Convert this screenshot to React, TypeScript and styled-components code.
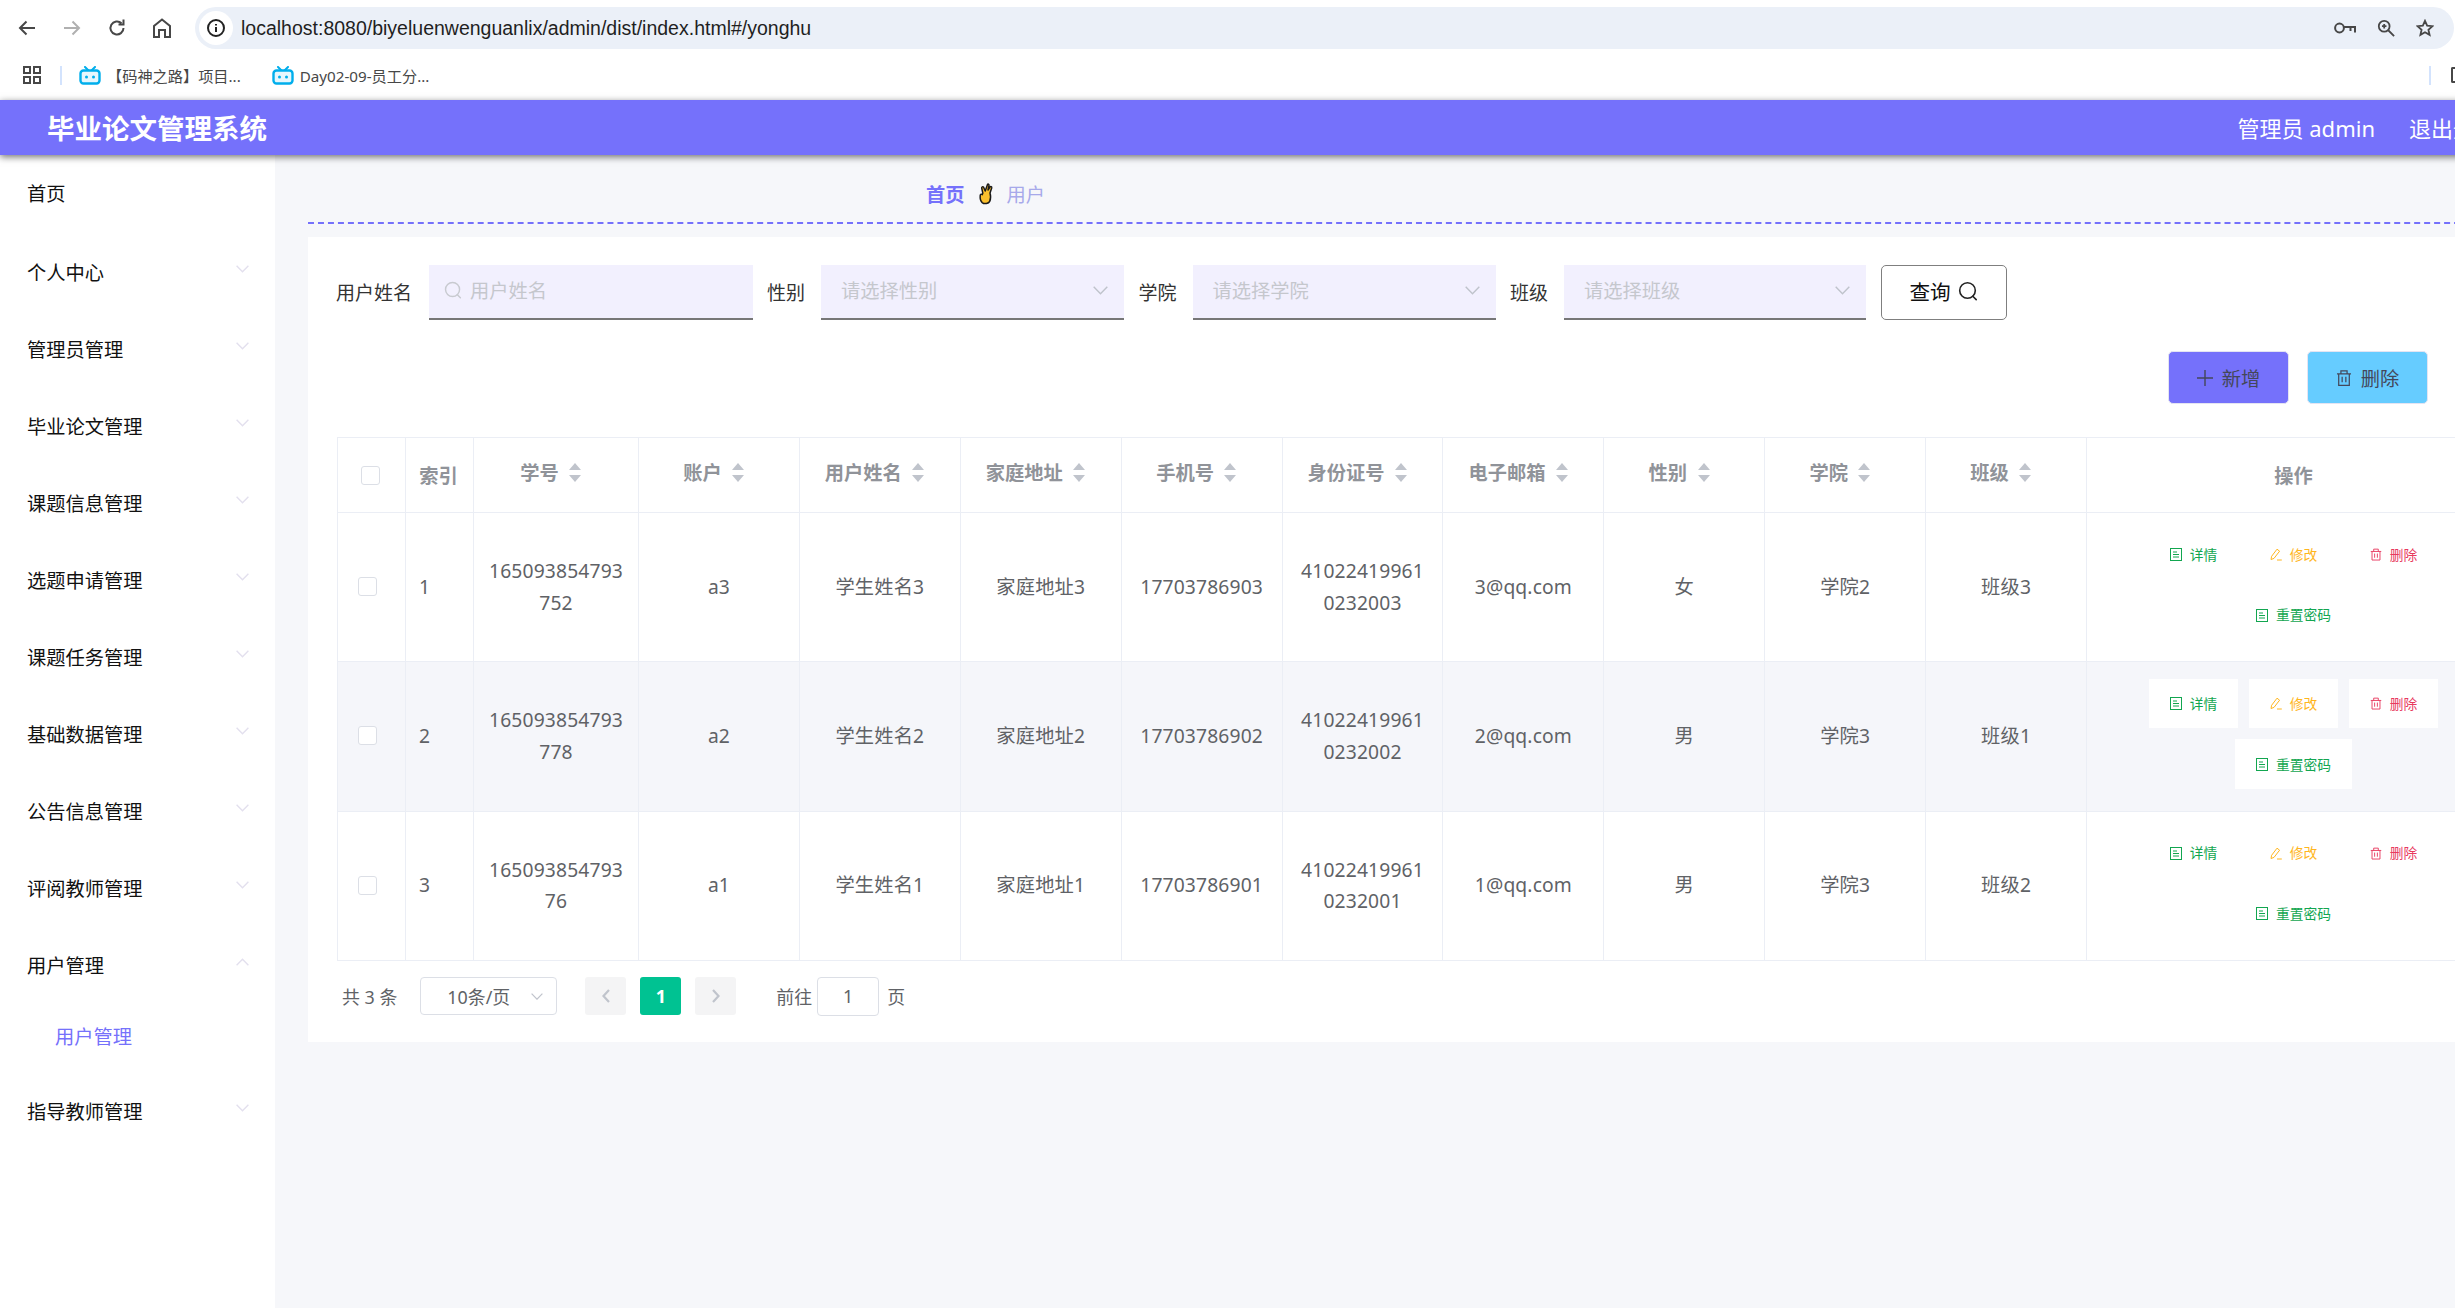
import React from 'react';
import styled, { createGlobalStyle } from 'styled-components';

const Global = createGlobalStyle`
  html, body { margin: 0; padding: 0; overflow: hidden; background: #fff; }
  body { font-family: "Noto Sans", "Noto Sans CJK SC", sans-serif; }
  * { box-sizing: border-box; }
`;

const Page = styled.div`
  width: 2500px;
  height: 1308px;
  overflow: hidden;
  display: flex;
  flex-direction: column;
`;

/* ---------- browser chrome ---------- */
const Browser = styled.div`
  height: 100px;
  background: #fff;
  display: flex;
  flex-direction: column;
  flex: none;
  width: 2455px;
`;
const Toolbar = styled.div`
  height: 56px;
  display: flex;
  align-items: flex-start;
  padding: 7px 1px 0 17px;
`;
const NavGroup = styled.div`
  height: 42px;
  display: flex;
  align-items: center;
  gap: 25px;
  margin-right: 23px;
`;
const AddressBar = styled.div`
  flex: 1;
  height: 42px;
  border-radius: 21px;
  background: #ebf0f8;
  display: flex;
  align-items: center;
  padding: 0 20px 0 4px;
`;
const SiteInfo = styled.div`
  width: 34px;
  height: 34px;
  border-radius: 50%;
  background: #fff;
  display: flex;
  align-items: center;
  justify-content: center;
  margin-right: 8px;
`;
const Url = styled.span`
  flex: 1;
  font-size: 19.5px;
  color: #1f1f1f;
  font-family: "Liberation Sans", "Noto Sans", sans-serif;
  white-space: nowrap;
`;
const BarIcons = styled.div`
  display: flex;
  align-items: center;
  gap: 21px;
`;
const Bookmarks = styled.div`
  height: 44px;
  padding: 0 0 6px 23px;
  display: flex;
  align-items: center;
`;
const BookSep = styled.div`
  width: 2px;
  height: 19px;
  background: #d3e3fd;
  margin: 0 17px 0 19px;
`;
const Bookmark = styled.div`
  display: flex;
  align-items: center;
  gap: 6px;
  margin-right: 31px;
  font-size: 15.2px;
  color: #474747;
  white-space: nowrap;
`;
const BookSpacer = styled.div`
  flex: 1;
`;
const BookEnd = styled.div`
  width: 2px;
  height: 19px;
  background: #d3e3fd;
  margin-right: 20px;
`;
const BookStub = styled.div`
  width: 4px;
  height: 16px;
  border: 2px solid #474747;
  border-right: none;
  border-radius: 2px 0 0 2px;
`;

/* ---------- app header ---------- */
const Header = styled.header`
  height: 55px;
  flex: none;
  background: #7571fb;
  box-shadow: 0 2px 7px rgba(0, 0, 0, 0.55);
  position: relative;
  z-index: 2;
  display: flex;
  align-items: center;
  justify-content: space-between;
  padding: 0 3px 2px 47px;
  color: #fff;
`;
const Title = styled.h1`
  margin: 0;
  font-size: 27.5px;
  font-weight: 700;
  color: #fff;
`;
const UserBox = styled.div`
  display: flex;
  align-items: center;
  gap: 34px;
  font-size: 22px;
`;

/* ---------- body ---------- */
const Body = styled.div`
  flex: 1;
  display: flex;
  min-height: 0;
`;
const Sidebar = styled.nav`
  width: 275px;
  flex: none;
  background: #fff;
`;
const MenuItem = styled.div<{ $first?: boolean }>`
  height: 77px;
  margin-bottom: ${p => (p.$first ? 2 : 0)}px;
  padding: 0 26px 1px 27px;
  display: flex;
  align-items: center;
  justify-content: space-between;
  font-size: 19.25px;
  color: #111;
`;
const SubItem = styled.div`
  height: 69px;
  padding: 0 0 6px 55px;
  display: flex;
  align-items: center;
  font-size: 19.25px;
  color: #7571fb;
`;
const Chevron = styled.svg`
  width: 13px;
  height: 8px;
  margin-bottom: 7px;
  fill: none;
  stroke: #e3e0ee;
  stroke-width: 1.4;
`;
const Main = styled.main`
  flex: 1;
  min-width: 0;
  background: #f6f7fa;
  padding-left: 33px;
`;
const Crumbs = styled.div`
  height: 69px;
  padding: 11px 0 0 618px;
  border-bottom: 2px dashed #7571fb;
  display: flex;
  align-items: center;
  font-size: 19.25px;
  gap: 13px;
`;
const CrumbHome = styled.b`
  color: #7571fb;
  font-weight: 700;
`;
const CrumbNow = styled.span`
  color: #a7a9ea;
`;
const Panel = styled.section`
  margin-top: 13px;
  background: #fff;
  height: 805px;
  padding: 28px 0 0 29px;
`;
const FilterRow = styled.div`
  display: flex;
  align-items: stretch;
  height: 55px;
  gap: 14.5px;
  margin-left: -1px;
`;
const Field = styled.div`
  display: flex;
  align-items: center;
`;
const FieldLabel = styled.label<{ $w: number }>`
  width: ${p => p.$w}px;
  flex: none;
  font-size: 19px;
  color: #333;
  padding-bottom: 1px;
`;
const NameBox = styled.div`
  width: 323.5px;
  height: 55px;
  background: #f2f0fe;
  border-bottom: 2px solid #777;
  display: flex;
  align-items: center;
  padding: 0 0 3px 15px;
  gap: 8px;
  color: #c8cad0;
`;
const NameInput = styled.input`
  flex: 1;
  min-width: 0;
  border: none;
  background: transparent;
  outline: none;
  font: inherit;
  font-size: 19.25px;
  padding: 0;
  &::placeholder { color: #c5c7cd; opacity: 1; }
`;
const SelectBox = styled.div<{ $w: number }>`
  width: ${p => p.$w}px;
  height: 55px;
  background: #f2f0fe;
  border-bottom: 2px solid #777;
  display: flex;
  align-items: center;
  justify-content: space-between;
  padding: 0 16px 3px 20px;
  font-size: 19.25px;
  color: #c5c7cd;
`;
const SelectArrow = styled.svg`
  width: 15px;
  height: 9px;
  fill: none;
  stroke: #bfc3cb;
  stroke-width: 1.4;
`;
const QueryButton = styled.button`
  width: 126px;
  height: 55px;
  background: #fff;
  border: 1px solid #7f7f7f;
  border-radius: 5px;
  display: flex;
  align-items: center;
  justify-content: center;
  gap: 7px;
  font: inherit;
  font-size: 20.6px;
  color: #111;
  padding: 0 0 3px;
`;
const ActionRow = styled.div`
  display: flex;
  justify-content: flex-end;
  gap: 18px;
  margin-top: 31px;
  padding-right: 72px;
`;
const ActionButton = styled.button<{ $bg: string }>`
  width: 121px;
  height: 53px;
  background: ${p => p.$bg};
  border: 1px solid #e4e4f2;
  border-radius: 5px;
  display: flex;
  align-items: center;
  justify-content: center;
  gap: 9px;
  font: inherit;
  font-size: 19.25px;
  color: #44475a;
  padding: 0;
`;
const ActionIcon = styled.svg`
  width: 16px;
  height: 16px;
  fill: none;
  stroke: #44475a;
  stroke-width: 1;
  flex: none;
`;

/* ---------- table ---------- */
const Table = styled.table`
  margin-top: 33px;
  width: 2163px;
  table-layout: fixed;
  border-collapse: collapse;
  font-size: 19.25px;
  color: #606266;
  border: 1px solid #ebeef5;
`;
const HeadRow = styled.tr`
  height: 75px;
`;
const Th = styled.th`
  border: 1px solid #ebeef5;
  padding: 0;
  font-weight: 700;
  color: #909399;
  text-align: center;
`;
const IndexTh = styled(Th)`
  padding-right: 2px;
`;
const SortHead = styled.span`
  display: inline-flex;
  align-items: center;
  position: relative;
  top: -3px;
`;
const SortCaret = styled.span`
  width: 33px;
  display: inline-flex;
  flex-direction: column;
  align-items: center;
  gap: 5px;
`;
const Up = styled.i`
  width: 0;
  height: 0;
  border: 6.5px solid transparent;
  border-top: none;
  border-bottom: 7px solid #c0c4cc;
`;
const Down = styled.i`
  width: 0;
  height: 0;
  border: 6.5px solid transparent;
  border-bottom: none;
  border-top: 7px solid #c0c4cc;
`;
const Row = styled.tr<{ $hover?: boolean }>`
  height: 149.3px;
  background: ${p => (p.$hover ? '#f5f6fa' : '#fff')};
`;
const Td = styled.td`
  border: 1px solid #ebeef5;
  padding: 0 0 1px;
  text-align: center;
  line-height: 31.5px;
`;
const IndexTd = styled(Td)`
  text-align: left;
  padding-left: 13px;
`;
const CheckTd = styled(Td)`
  padding-right: 9px;
`;
const Line = styled.span`
  display: block;
  white-space: nowrap;
  letter-spacing: 0.15px;
`;
const Check = styled.span`
  display: block;
  width: 19px;
  height: 19px;
  margin: 0 auto;
  background: #fff;
  border: 1px solid #dcdfe6;
  border-radius: 3px;
`;
const HeadCheck = styled(Check)`
  position: relative;
  left: -1px;
`;
const OpWrap = styled.div`
  width: 300px;
  margin: -3px auto 0;
  display: flex;
  flex-wrap: wrap;
  justify-content: center;
  gap: 11px;
`;
const OpButton = styled.button<{ $wide?: boolean; $color: string }>`
  width: ${p => (p.$wide ? 117 : 89)}px;
  height: ${p => (p.$wide ? 50 : 49)}px;
  background: #fff;
  border: none;
  border-radius: 0;
  display: flex;
  align-items: center;
  justify-content: center;
  gap: 8px;
  padding: 0;
  font: inherit;
  font-size: 13.75px;
  line-height: 1;
  color: ${p => p.$color};
`;
const OpIcon = styled.svg`
  width: 12px;
  height: 13px;
  fill: none;
  stroke: currentColor;
  stroke-width: 1;
  flex: none;
`;

/* ---------- pagination ---------- */
const Pager = styled.div`
  margin-top: 16px;
  height: 39px;
  display: flex;
  align-items: center;
  font-size: 17.9px;
  color: #606266;
  padding-left: 5px;
`;
const PageSize = styled.div`
  width: 137px;
  height: 38px;
  margin: 0 28px 0 23px;
  border: 1px solid #dcdfe6;
  border-radius: 4px;
  display: flex;
  align-items: center;
  justify-content: space-between;
  padding: 0 13px 0 26px;
`;
const PageArrow = styled.svg`
  width: 12px;
  height: 7px;
  fill: none;
  stroke: #c0c4cc;
  stroke-width: 1.2;
`;
const PageBtn = styled.div<{ $active?: boolean }>`
  width: 41px;
  height: 38px;
  margin-right: 14px;
  border-radius: 3px;
  background: ${p => (p.$active ? '#00c292' : '#f4f4f5')};
  color: ${p => (p.$active ? '#fff' : '#c0c4cc')};
  display: flex;
  align-items: center;
  justify-content: center;
  font-weight: 700;
`;
const PageChevron = styled.svg`
  width: 10px;
  height: 16px;
  fill: none;
  stroke: currentColor;
  stroke-width: 2.2;
`;
const JumpLabel = styled.span`
  margin-left: 26px;
`;
const JumpBox = styled.div`
  width: 62px;
  height: 39px;
  margin: 0 8px 0 5px;
  border: 1px solid #dcdfe6;
  border-radius: 4px;
  display: flex;
  align-items: center;
  justify-content: center;
`;

/* ---------- icons ---------- */
const Ico = styled.svg`
  fill: none;
  stroke: #474747;
  stroke-width: 2;
  flex: none;
`;
const Tv = () => (
  <svg width="22" height="19" viewBox="0 0 22 19" fill="none">
    <path d="M6 1l3 3M16 1l-3 3" stroke="#00aeec" strokeWidth="2" strokeLinecap="round" />
    <rect x="1.5" y="4.5" width="19" height="13" rx="3" fill="#e6f7fd" stroke="#00aeec" strokeWidth="2.4" />
    <circle cx="7.5" cy="11" r="1.5" fill="#00aeec" />
    <circle cx="14.5" cy="11" r="1.5" fill="#00aeec" />
  </svg>
);
const Hand = () => (
  <svg width="16" height="22" viewBox="0 0 16 22">
    <path
      d="M9.6 1.2c1-.3 1.6.4 1.4 1.4L10 7l2-3c.7-.9 2-.2 1.7.9L12 10c.9 3 .8 6-.3 8.4-1 2.2-5.3 3-7.5 1.2C2.4 18 2 15 2.2 12.5c.1-1.3 1.4-1.6 2-.9l.6-1.4L3.7 5c-.2-1.1 1.2-1.7 1.9-.7L7.2 8z"
      fill="#fbc02d"
      stroke="#1a1a1a"
      strokeWidth="1.5"
      strokeLinejoin="round"
    />
  </svg>
);
const SearchGlyph = ({ size, color }: { size: number; color: string }) => (
  <svg width={size} height={size} viewBox="0 0 20 20" fill="none" stroke={color} strokeWidth="1.6">
    <circle cx="9.5" cy="9.5" r="7.8" />
    <path d="M14.8 15.2l3.4 3.4" strokeLinecap="round" />
  </svg>
);
const TrashPaths = () => (
  <path d="M.8 3.2h11.4M4 3.2V.7h5v2.5M2.2 3.2v9.3h8.6V3.2M5 5.5v4.5M8 5.5v4.5" />
);
const DocIcon = () => (
  <OpIcon viewBox="0 0 12 13">
    <rect x=".5" y=".5" width="11" height="12" />
    <path d="M3 4h4M3 6.5h6M3 9h6" />
  </OpIcon>
);
const PenIcon = () => (
  <OpIcon viewBox="0 0 12 13">
    <path d="M1 11.5l.6-3.2L7 1.2l2.6 2L4 10.4zM7 12h4.8" />
  </OpIcon>
);
const TrashIcon = () => (
  <OpIcon viewBox="0 0 13 13">
    <TrashPaths />
  </OpIcon>
);

const ChevronDown = () => (
  <Chevron viewBox="0 0 13 8"><path d="M.6.8l5.9 6 5.9-6" /></Chevron>
);
const ChevronUp = () => (
  <Chevron viewBox="0 0 13 8"><path d="M.6 7.2l5.9-6 5.9 6" /></Chevron>
);
const SelectChevron = () => (
  <SelectArrow viewBox="0 0 15 9"><path d="M.7.8l6.8 7 6.8-7" /></SelectArrow>
);

/* ---------- data ---------- */
const menuBefore = ['个人中心', '管理员管理', '毕业论文管理', '课题信息管理', '选题申请管理', '课题任务管理', '基础数据管理', '公告信息管理', '评阅教师管理'];
const sortCols = ['学号', '账户', '用户姓名', '家庭地址', '手机号', '身份证号', '电子邮箱', '性别', '学院', '班级'];
const colWidths = [68, 68, 165, 160.9, 160.9, 160.9, 160.9, 160.9, 160.9, 160.9, 160.9, 160.9, 414];
const rows = [
  { idx: 1, no: ['165093854793', '752'], acc: 'a3', name: '学生姓名3', addr: '家庭地址3', tel: '17703786903', id: ['41022419961', '0232003'], mail: '3@qq.com', sex: '女', col: '学院2', cls: '班级3' },
  { idx: 2, no: ['165093854793', '778'], acc: 'a2', name: '学生姓名2', addr: '家庭地址2', tel: '17703786902', id: ['41022419961', '0232002'], mail: '2@qq.com', sex: '男', col: '学院3', cls: '班级1', hover: true },
  { idx: 3, no: ['165093854793', '76'], acc: 'a1', name: '学生姓名1', addr: '家庭地址1', tel: '17703786901', id: ['41022419961', '0232001'], mail: '1@qq.com', sex: '男', col: '学院3', cls: '班级2' },
];

const green = '#12a650';
const amber = '#ffb61e';
const red = '#e8395f';

export default function App() {
  return (
    <Page>
      <Global />
      <Browser>
        <Toolbar>
          <NavGroup>
            <Ico width="20" height="20" viewBox="0 0 20 20"><path d="M18 10H3M9.5 3.5L3 10l6.5 6.5" /></Ico>
            <Ico width="20" height="20" viewBox="0 0 20 20"><path d="M2 10h15M10.5 3.5L17 10l-6.5 6.5" stroke="#b0b0b0" /></Ico>
            <Ico width="20" height="20" viewBox="0 0 20 20"><path d="M16.5 10a6.5 6.5 0 1 1-2-4.7M16.5 1.5v5h-5" /></Ico>
            <Ico width="20" height="22" viewBox="0 0 20 22"><path d="M2 20V9l8-6.5L18 9v11h-5v-7H7v7z" /></Ico>
          </NavGroup>
          <AddressBar>
            <SiteInfo>
              <Ico width="20" height="20" viewBox="0 0 20 20"><circle cx="10" cy="10" r="8" stroke="#222" /><path d="M10 9v5M10 6v1.6" stroke="#222" /></Ico>
            </SiteInfo>
            <Url>localhost:8080/biyeluenwenguanlix/admin/dist/index.html#/yonghu</Url>
            <BarIcons>
              <Ico width="22" height="14" viewBox="0 0 22 14"><circle cx="5.5" cy="7" r="4.4" /><path d="M10 6h11v5.5M16.5 6v4" /></Ico>
              <Ico width="18" height="18" viewBox="0 0 20 20"><circle cx="8" cy="8" r="6" /><path d="M12.5 12.5L19 19M5.5 8h5M8 5.5v5" /></Ico>
              <Ico width="18" height="18" viewBox="0 0 20 20"><path d="M10 2l2.4 5.4 5.8.6-4.4 3.9 1.3 5.7L10 14.7l-5.1 2.9 1.3-5.7L1.8 8l5.8-.6z" /></Ico>
            </BarIcons>
          </AddressBar>
        </Toolbar>
        <Bookmarks>
          <Ico width="18" height="18" viewBox="0 0 18 18"><rect x="1" y="1" width="6" height="6" /><rect x="11" y="1" width="6" height="6" /><rect x="1" y="11" width="6" height="6" /><rect x="11" y="11" width="6" height="6" /></Ico>
          <BookSep />
          <Bookmark><Tv />【码神之路】项目...</Bookmark>
          <Bookmark><Tv />Day02-09-员工分...</Bookmark>
          <BookSpacer />
          <BookEnd />
          <BookStub />
        </Bookmarks>
      </Browser>
      <Header>
        <Title>毕业论文管理系统</Title>
        <UserBox>
          <span>管理员 admin</span>
          <span>退出登录</span>
        </UserBox>
      </Header>
      <Body>
        <Sidebar>
          <MenuItem $first>首页</MenuItem>
          {menuBefore.map(m => (
            <MenuItem key={m}>{m}<ChevronDown /></MenuItem>
          ))}
          <MenuItem>用户管理<ChevronUp /></MenuItem>
          <SubItem>用户管理</SubItem>
          <MenuItem>指导教师管理<ChevronDown /></MenuItem>
        </Sidebar>
        <Main>
          <Crumbs>
            <CrumbHome>首页</CrumbHome>
            <Hand />
            <CrumbNow>用户</CrumbNow>
          </Crumbs>
          <Panel>
            <FilterRow>
              <Field>
                <FieldLabel $w={93}>用户姓名</FieldLabel>
                <NameBox>
                  <SearchGlyph size={18} color="#c8cad0" />
                  <NameInput placeholder="用户姓名" />
                </NameBox>
              </Field>
              <Field>
                <FieldLabel $w={54}>性别</FieldLabel>
                <SelectBox $w={303}>请选择性别<SelectChevron /></SelectBox>
              </Field>
              <Field>
                <FieldLabel $w={54}>学院</FieldLabel>
                <SelectBox $w={303}>请选择学院<SelectChevron /></SelectBox>
              </Field>
              <Field>
                <FieldLabel $w={54}>班级</FieldLabel>
                <SelectBox $w={302}>请选择班级<SelectChevron /></SelectBox>
              </Field>
              <QueryButton>查询<SearchGlyph size={20} color="#222" /></QueryButton>
            </FilterRow>
            <ActionRow>
              <ActionButton $bg="#7571fb">
                <ActionIcon viewBox="0 0 16 16"><path d="M8 0v16M0 8h16" strokeWidth="1.4" /></ActionIcon>
                新增
              </ActionButton>
              <ActionButton $bg="#66ccff">
                <ActionIcon viewBox="0 0 13 13"><TrashPaths /></ActionIcon>
                删除
              </ActionButton>
            </ActionRow>
            <Table>
              <colgroup>
                {colWidths.map((w, i) => <col key={i} width={w} />)}
              </colgroup>
              <thead>
                <HeadRow>
                  <Th><HeadCheck /></Th>
                  <IndexTh>索引</IndexTh>
                  {sortCols.map(c => (
                    <Th key={c}>
                      <SortHead>{c}<SortCaret><Up /><Down /></SortCaret></SortHead>
                    </Th>
                  ))}
                  <Th>操作</Th>
                </HeadRow>
              </thead>
              <tbody>
                {rows.map(r => (
                  <Row key={r.idx} $hover={r.hover}>
                    <CheckTd><Check /></CheckTd>
                    <IndexTd>{r.idx}</IndexTd>
                    <Td>{r.no.map(l => <Line key={l}>{l}</Line>)}</Td>
                    <Td><Line>{r.acc}</Line></Td>
                    <Td><Line>{r.name}</Line></Td>
                    <Td><Line>{r.addr}</Line></Td>
                    <Td><Line>{r.tel}</Line></Td>
                    <Td>{r.id.map(l => <Line key={l}>{l}</Line>)}</Td>
                    <Td><Line>{r.mail}</Line></Td>
                    <Td><Line>{r.sex}</Line></Td>
                    <Td><Line>{r.col}</Line></Td>
                    <Td><Line>{r.cls}</Line></Td>
                    <Td>
                      <OpWrap>
                        <OpButton $color={green}><DocIcon />详情</OpButton>
                        <OpButton $color={amber}><PenIcon />修改</OpButton>
                        <OpButton $color={red}><TrashIcon />删除</OpButton>
                        <OpButton $wide $color={green}><DocIcon />重置密码</OpButton>
                      </OpWrap>
                    </Td>
                  </Row>
                ))}
              </tbody>
            </Table>
            <Pager>
              <span>共 3 条</span>
              <PageSize>10条/页<PageArrow viewBox="0 0 12 7"><path d="M.6.6L6 6.2 11.4.6" /></PageArrow></PageSize>
              <PageBtn><PageChevron viewBox="0 0 10 16"><path d="M8 2L2.5 8 8 14" /></PageChevron></PageBtn>
              <PageBtn $active>1</PageBtn>
              <PageBtn><PageChevron viewBox="0 0 10 16"><path d="M2 2l5.5 6L2 14" /></PageChevron></PageBtn>
              <JumpLabel>前往</JumpLabel>
              <JumpBox>1</JumpBox>
              <span>页</span>
            </Pager>
          </Panel>
        </Main>
      </Body>
    </Page>
  );
}
